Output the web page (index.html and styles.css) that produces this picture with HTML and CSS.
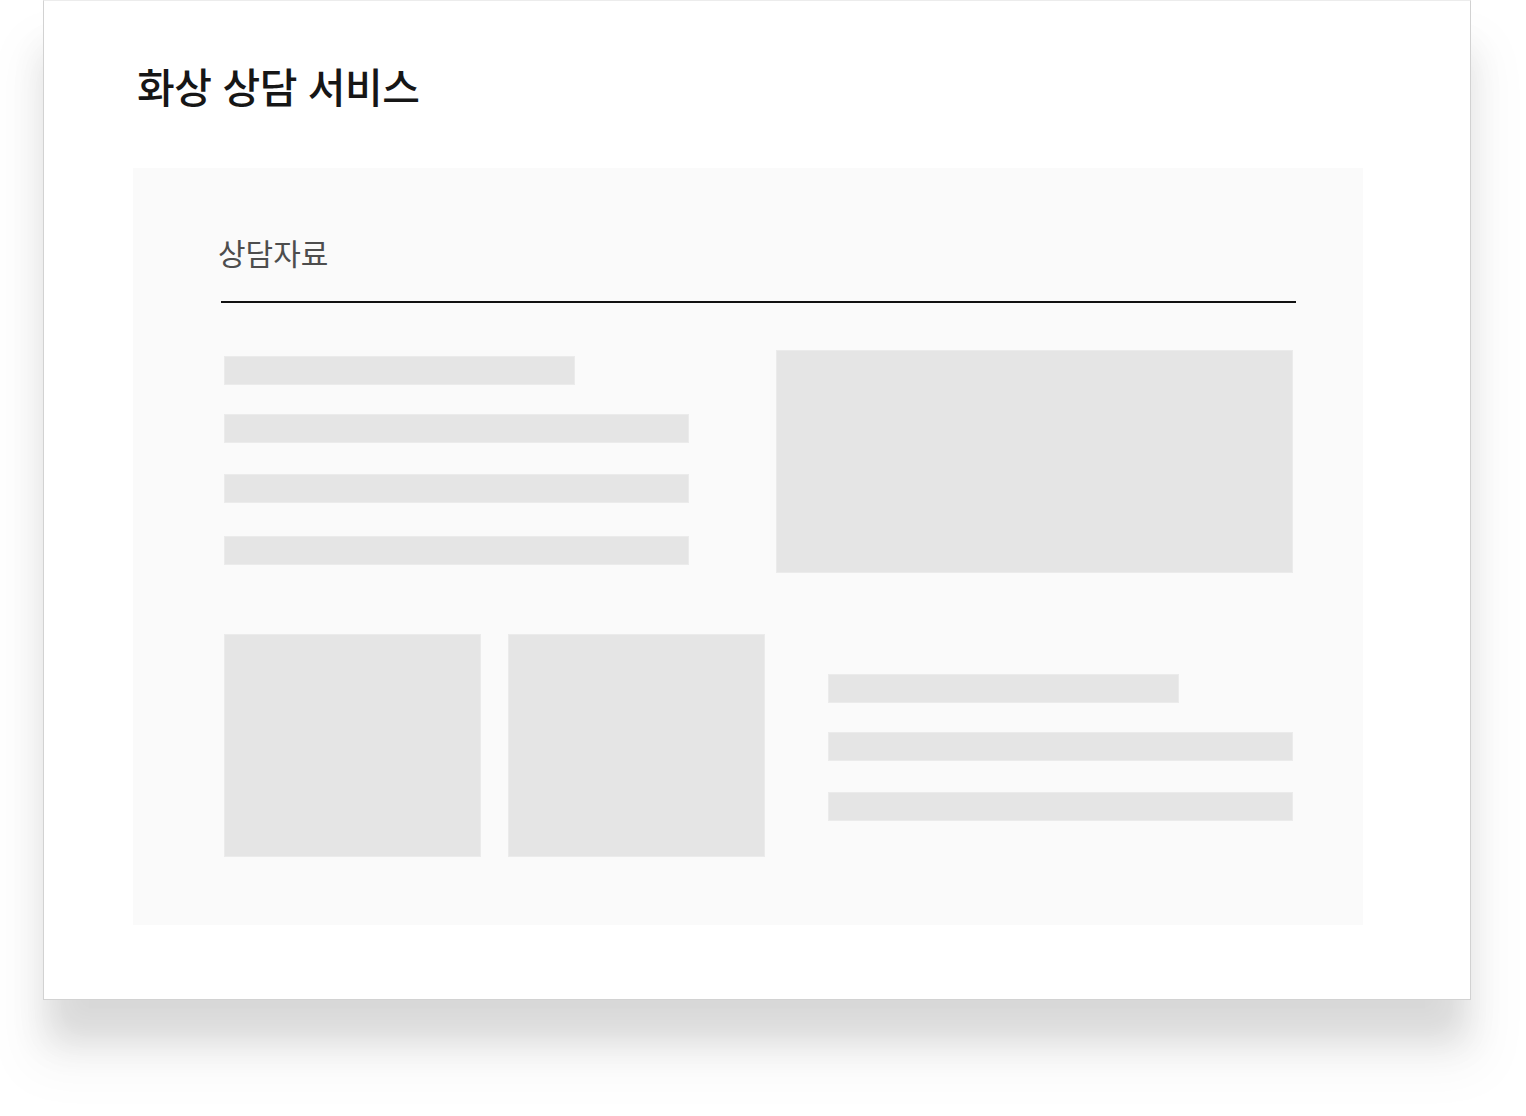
FILE: index.html
```html
<!DOCTYPE html>
<html lang="ko">
<head>
    <meta charset="UTF-8">
    <meta name="viewport" content="width=device-width, initial-scale=1.0">
    <title>화상 상담 서비스</title>
    <link rel="stylesheet" href="styles.css">
</head>
<body>
<div class="card">
    <h1 class="card-title">화상 상담 서비스</h1>
    <div class="panel">
        <h2 class="panel-title">상담자료</h2>
        <div class="row row-top">
            <div class="lines lines-top">
                <div class="bar short"></div>
                <div class="bar"></div>
                <div class="bar"></div>
                <div class="bar"></div>
            </div>
            <div class="bar block-wide"></div>
        </div>
        <div class="row row-bottom">
            <div class="thumbs">
                <div class="bar thumb"></div>
                <div class="bar thumb"></div>
            </div>
            <div class="lines lines-bottom">
                <div class="bar short"></div>
                <div class="bar"></div>
                <div class="bar"></div>
            </div>
        </div>
    </div>
</div>
</body>
</html>
```

FILE: styles.css
```css
html, body {
    margin: 0;
    padding: 0;
    background: #fff;
}

body {
    font-family: "Noto Sans CJK KR", "Noto Sans", sans-serif;
    padding-bottom: 116px;
}

.card {
    box-sizing: border-box;
    margin-left: 43px;
    width: 1428px;
    height: 1000px;
    padding: 59px 0 74px 89px;
    background: #fff;
    border: 1px solid #d2d2d2;
    border-top-color: #ececec;
    box-shadow: 0 45px 35px -5px rgba(0, 0, 0, 0.12),
                0 55px 50px 15px rgba(0, 0, 0, 0.04);
}

.card-title {
    margin: 0 0 58px;
    padding-left: 4px;
    font-size: 41px;
    line-height: 50px;
    font-weight: 500;
    letter-spacing: -0.5px;
    color: #161616;
}

.panel {
    box-sizing: border-box;
    width: 1230px;
    height: 757px;
    padding: 62px 67px 68px 88px;
    background: #fafafa;
}

.panel-title {
    margin: 0;
    padding: 2px 0 29px;
    text-indent: -3px;
    font-size: 30px;
    line-height: 40px;
    font-weight: 400;
    color: #4d4d4d;
    border-bottom: 2px solid #111;
}

.row {
    display: flex;
    justify-content: space-between;
    padding: 0 3px;
    height: 223px;
}

.row-top {
    margin-top: 47px;
}

.row-bottom {
    margin-top: 61px;
}

.bar {
    box-sizing: border-box;
    height: 29px;
    background: #e5e5e5;
    border: 1px solid #ebebeb;
}

.bar.short {
    width: 351px;
}

.lines {
    display: flex;
    flex-direction: column;
    width: 465px;
}

.lines .bar:nth-child(2) {
    margin-top: 29px;
}

.lines .bar:nth-child(3) {
    margin-top: 31px;
}

.lines .bar:nth-child(4) {
    margin-top: 33px;
}

.lines-top {
    padding-top: 6px;
}

.lines-bottom {
    padding-top: 40px;
}

.block-wide {
    width: 517px;
    height: 223px;
}

.thumbs {
    display: flex;
    gap: 27px;
}

.thumb {
    width: 257px;
    height: 223px;
}
```
